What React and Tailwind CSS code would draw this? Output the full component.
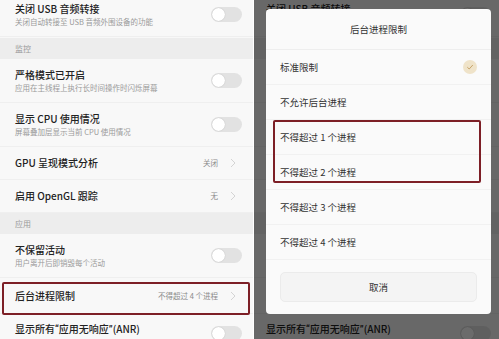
import React from "react";

const FONT = { fontFamily: '"Noto Sans CJK SC", "Noto Sans", sans-serif' };

function Toggle() {
  return (
    <div className="w-[31px] h-[15px] rounded-full bg-[#e2e2e2] flex items-center px-[1px]">
      <div className="w-[13px] h-[13px] rounded-full bg-white shadow-[0_0_1px_rgba(0,0,0,0.25)]" />
    </div>
  );
}

function Chevron() {
  return (
    <svg width="6" height="10" viewBox="0 0 6 10" className="ml-[12px]">
      <path d="M1 1 L5 5 L1 9" fill="none" stroke="#d4d4d4" strokeWidth="1" />
    </svg>
  );
}

function Q({ c }) {
  return <span className="font-['Roboto',sans-serif]">{c}</span>;
}

function TwoLine({ title, sub, pad }) {
  return (
    <div className={`h-[44px] flex items-center justify-between ${pad} border-b border-[#efefef]`}>
      <div className="flex flex-col gap-[2px]">
        <div className="text-[10px] leading-[12px] text-[#222] font-medium whitespace-nowrap">{title}</div>
        <div className="text-[7.5px] leading-[10px] text-[#9a9a9a] whitespace-nowrap">{sub}</div>
      </div>
      <div className="mr-[-4px]"><Toggle /></div>
    </div>
  );
}

function PartialRow({ title, pad }) {
  return (
    <div className={`h-[25px] flex items-start justify-between pt-[9px] ${pad}`}>
      <div className="text-[10px] leading-[12px] text-[#222] font-medium whitespace-nowrap">{title}</div>
      <div className="mr-[-4px] mt-[3px]"><Toggle /></div>
    </div>
  );
}

function OneLine({ title, value, pad, h }) {
  return (
    <div className={`${h} flex items-center justify-between ${pad} border-b border-[#efefef]`}>
      <div className="text-[10px] leading-[12px] text-[#222] font-medium whitespace-nowrap">{title}</div>
      <div className="flex items-center mr-[2px]">
        <span className="text-[7.5px] text-[#8a8a8a] whitespace-nowrap">{value}</span>
        <Chevron />
      </div>
    </div>
  );
}

function Section({ label, pad }) {
  return (
    <div className={`h-[21px] flex items-center ${pad} bg-[#ededed] text-[8px] text-[#9a9a9a]`}>{label}</div>
  );
}

function SettingsList({ pad }) {
  return (
    <div className="flex flex-col mt-[-7px] bg-[#f8f8f8]">
      <TwoLine pad={pad} title="关闭 USB 音频转接" sub="关闭自动转接至 USB 音频外围设备的功能" />
      <div className="h-[1px]" />
      <Section pad={pad} label="监控" />
      <TwoLine pad={pad} title="严格模式已开启" sub="应用在主线程上执行长时间操作时闪烁屏幕" />
      <TwoLine pad={pad} title="显示 CPU 使用情况" sub="屏幕叠加层显示当前 CPU 使用情况" />
      <OneLine pad={pad} h="h-[33px]" title="GPU 呈现模式分析" value="关闭" />
      <OneLine pad={pad} h="h-[33px]" title="启用 OpenGL 跟踪" value="无" />
      <Section pad={pad} label="应用" />
      <TwoLine pad={pad} title="不保留活动" sub="用户离开后即销毁每个活动" />
      <OneLine pad={pad} h="h-[36px]" title="后台进程限制" value="不得超过 4 个进程" />
      <PartialRow pad={pad} title={<>显示所有<Q c="“" />应用无响应<Q c="”" />(ANR)</>} />
    </div>
  );
}

function Option({ label, checked }) {
  return (
    <div className="h-[35px] flex items-center justify-between pl-[14px] pr-[14px] border-b border-[#f1f1f1]">
      <span className="text-[9.5px] text-[#333] whitespace-nowrap">{label}</span>
      {checked && (
        <div className="w-[14px] h-[14px] rounded-full bg-[#efe3c9] flex items-center justify-center">
          <svg width="8" height="8" viewBox="0 0 8 8">
            <path d="M1.3 4.2 L3.2 6 L6.8 2" fill="none" stroke="#c7a46a" strokeWidth="1" />
          </svg>
        </div>
      )}
    </div>
  );
}

export default function App() {
  return (
    <div style={FONT} className="w-[499px] h-[339px] flex overflow-hidden bg-white">
      <div className="relative w-[253px] h-full overflow-hidden bg-[#f8f8f8]">
        <SettingsList pad="px-[15px]" />
        <div className="absolute left-[2px] top-[282px] w-[248px] h-[33px] border-2 border-[#7d1f26] rounded-[2px]" />
      </div>
      <div className="w-[1px]" />
      <div className="relative flex-1 h-full overflow-hidden bg-[#f8f8f8]">
        <div className="mt-[-4px]">
          <SettingsList pad="px-[12px]" />
        </div>
        <div className="absolute inset-0 bg-black/[0.58]" />
        <div className="absolute left-[12px] top-[9px] w-[225px] h-[305px] rounded-[4px] bg-[#fafafa] flex flex-col">
          <div className="h-[41px] flex items-center justify-center border-b border-[#eeeeee] text-[9.5px] text-[#333]">
            后台进程限制
          </div>
          <Option label="标准限制" checked />
          <Option label="不允许后台进程" />
          <Option label="不得超过 1 个进程" />
          <Option label="不得超过 2 个进程" />
          <Option label="不得超过 3 个进程" />
          <Option label="不得超过 4 个进程" />
          <div className="px-[14px] pt-[12px]">
            <div className="h-[30px] rounded-[5px] bg-[#f4f4f4] border border-[#ebebeb] flex items-center justify-center text-[9.5px] text-[#333]">
              取消
            </div>
          </div>
        </div>
        <div className="absolute left-[19px] top-[120px] w-[208px] h-[63px] border-2 border-[#7d1f26] rounded-[2px]" />
      </div>
    </div>
  );
}
